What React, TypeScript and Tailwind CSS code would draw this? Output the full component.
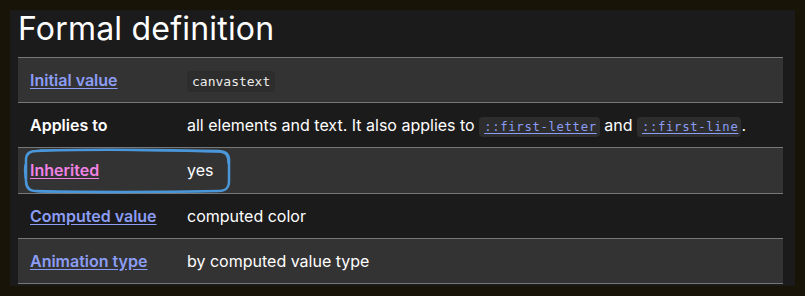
const ROWS = [
  { label: "Initial value", link: true },
  { label: "Applies to", link: false },
  { label: "Inherited", link: true, visited: true },
  { label: "Computed value", link: true },
  { label: "Animation type", link: true },
];

function Code({ children, link }: { children: React.ReactNode; link?: boolean }) {
  return (
    <code
      className={`rounded-[4px] bg-[#2d2d2d] py-[3px] font-['DejaVu_Sans_Mono',monospace] ${
        link
          ? "pl-[5px] pr-[3px] text-[12.2px] tracking-[0.7px] text-[#8c9df5] underline underline-offset-2"
          : "px-[5px] text-[13px] text-[#ececec]"
      }`}>
      {children}
    </code>
  );
}

function Value({ i }: { i: number }) {
  if (i === 0) return <Code>canvastext</Code>;
  if (i === 1)
    return (
      <span>
        all elements and text. It also applies to <Code link>::first-letter</Code> and{" "}
        <Code link>::first-line</Code>.
      </span>
    );
  if (i === 2) return <span>yes</span>;
  if (i === 3) return <span>computed color</span>;
  return <span>by computed value type</span>;
}

export default function App() {
  return (
    <div className="h-[296px] w-[805px] bg-[#181407] p-[10px] font-['Inter',sans-serif] text-white">
      <div className="h-[276px] w-[785px] bg-[#1b1b1b] pl-2 pr-3">
        <h2 className="mb-[9px] text-[32px] leading-[38px] font-normal tracking-[0.2px]">Formal definition</h2>

        <div className="relative border-b border-[#777] text-[16px]">
          {ROWS.map((row, i) => (
            <div
              key={row.label}
              className={`grid h-[45.2px] grid-cols-[157px_1fr] items-center border-t border-[#777] ${
                i % 2 === 0 ? "bg-[#333333]" : "bg-[#1b1b1b]"
              }`}>
              <div className="pl-3 font-semibold">
                {row.link ? (
                  <span
                    className={`underline underline-offset-2 ${
                      row.visited ? "text-[#f182e6]" : "text-[#8c9df5]"
                    }`}>
                    {row.label}
                  </span>
                ) : (
                  row.label
                )}
              </div>
              <div className="pl-3">
                <Value i={i} />
              </div>
            </div>
          ))}

          {/* hand-drawn highlight round "Inherited" */}
          <svg
            className="pointer-events-none absolute left-[4px] top-[91px]"
            width="212"
            height="46"
            viewBox="0 0 212 46"
            fill="none"
            stroke="#4a97da"
            strokeWidth="2.5"
            strokeLinecap="round">
            <path d="M14 3 C60 1 140 2 196 3 C204 3 207 6 207 12 L207 33 C207 40 204 43 196 43 C140 44 60 44 14 43 C7 43 4 40 4 33 L4 12 C4 6 7 3 14 3 Z" />
            <path d="M18 2 C80 1 150 3 198 4 C205 5 206 9 206 15 M3 17 C2 25 3 31 5 37 C7 42 12 44 20 44 C90 45 160 44 200 43" strokeWidth="1.6" />
          </svg>
        </div>
      </div>
    </div>
  );
}
